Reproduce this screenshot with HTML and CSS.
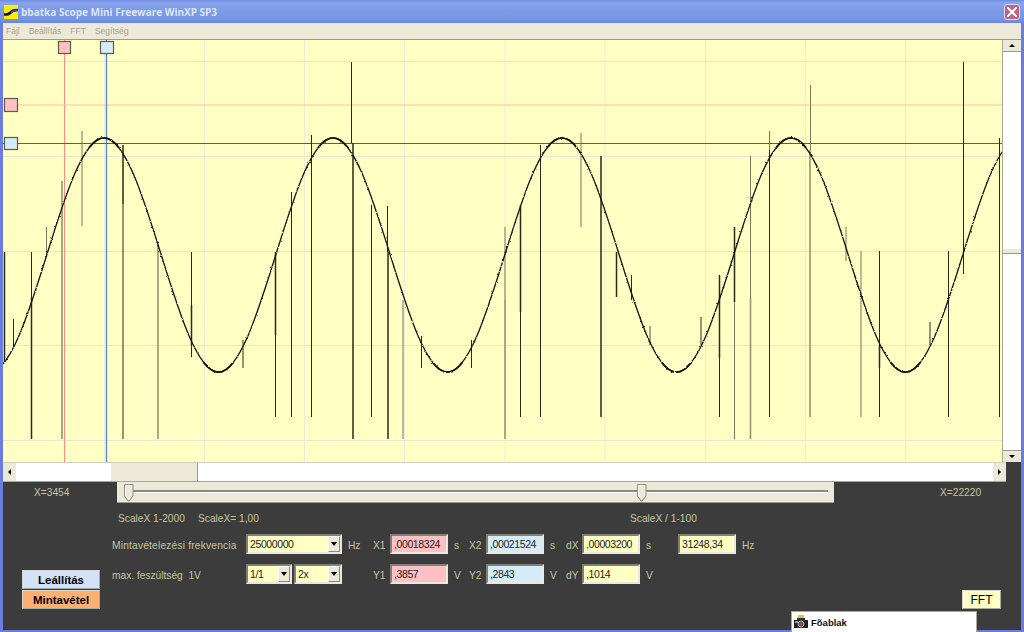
FILE: index.html
```html
<!DOCTYPE html>
<html lang="hu">

<head>
    <meta charset="UTF-8">
    <title>bbatka Scope Mini Freeware WinXP SP3</title>
    <link rel="stylesheet" href="styles.css">
</head>

<body>
    <div class="window">

        <div class="titlebar">
            <svg class="app-icon" width="14" height="14" viewBox="0 0 14 14">
                <rect width="14" height="14" fill="#ffee00"/>
                <path d="M0 9.5C3 9.5 4 10 6 8S9 5 14 5" fill="none" stroke="#0a0a60" stroke-width="2.6"/>
                <path d="M7 7.5C9 5.5 11 5 14 5" fill="none" stroke="#1c50e8" stroke-width="1.6"/>
            </svg>
            <span class="title">bbatka Scope Mini Freeware WinXP SP3</span>
            <div class="close">
                <svg width="10" height="10" viewBox="0 0 10 10">
                    <path d="M1 1L9 9M9 1L1 9" stroke="#fff" stroke-width="2" stroke-linecap="square"/>
                </svg>
            </div>
        </div>

        <div class="menubar">
            <span>Fájl</span>
            <span>Beállítás</span>
            <span>FFT</span>
            <span>Segítség</span>
        </div>

        <div class="scope-row">
            <svg class="scope" width="999" height="422" viewBox="3 40 999 422">
                <defs>
                    <filter id="rough" filterUnits="userSpaceOnUse" x="-20" y="0" width="1060" height="500" color-interpolation-filters="sRGB">
                        <feTurbulence type="fractalNoise" baseFrequency="0.8" numOctaves="1" seed="3"/>
                        <feDisplacementMap in="SourceGraphic" scale="2.4" xChannelSelector="R" yChannelSelector="G"/>
                    </filter>
                </defs>

                <!-- racs -->
                <path class="grid" d="M104.5 40V462M204.5 40V462M304.5 40V462M404.5 40V462M505 40V462M605 40V462M705.5 40V462M805.5 40V462M905.5 40V462"/>
                <path class="grid-h" d="M3 61.5H1002M3 156.5H1002M3 251.5H1002M3 345.5H1002M3 440.5H1002"/>

                <!-- kurzorok -->
                <path class="cursor-red-v" d="M64.5 40V462"/>
                <path class="cursor-red-h" d="M3 105H1002"/>
                <path class="cursor-blue-v" d="M106.5 40V462"/>
                <path class="cursor-blue-h" d="M3 143.5H1002"/>

                <!-- tuskek -->
                <path class="spike" d="M13.5 319V347M31.5 252V298M123 204V439M191.5 252V357M243 340V368M275.5 335V417M291.5 192V417M311.5 135V417M351.5 62V143M371.5 205V417M387.5 206V252M421.5 336V368M471.5 340V368M520.5 312V417M540.5 145V417M616.5 252V297M631.5 275V300M701 317V345M719.5 358V417M769.5 131V417M879.5 251V417M930 322V345M948.5 251V417M963.5 62V274M999.5 138V417"/>
                <path class="spike-thick" d="M4.5 252V362M31.5 298V439M123 145V204M191.5 305V345M275.5 252V335M353 143V439M388 252V439M520.5 205V312M601 156V417M616.5 252V297M719.5 275V358M734.5 227V302M879.5 345V368"/>
                <path class="spike-olive" d="M46.5 227V255M82 131V226M403 300V439M505 227V300M581 133V227M734.5 302V439M750.5 156V297M769.5 131V150M810.5 85V150M846 227V261M861 251V417"/>
                <path class="spike-olive-thick" d="M62 181V439M158 245V439M505 300V439M650 326V345M750.5 297V439M810 150V417"/>

                <!-- jel -->
                <path class="trace" filter="url(#rough)" d="M-10.5 372c41.7 0 72.8-234 114.5-234s72.8 234 114.5 234s72.8-234 114.5-234s72.8 234 114.5 234s72.8-234 114.5-234s72.8 234 114.5 234s72.8-234 114.5-234s72.8 234 114.5 234s72.8-234 114.5-234"/>
                <path class="trace-fuzz" filter="url(#rough)" d="M89 147.8Q104 128 119 147.8M318 147.8Q333 128 348 147.8M547 147.8Q562 128 577 147.8M776 147.8Q791 128 806 147.8M203.5 362.2Q218.5 382 233.5 362.2M432.5 362.2Q447.5 382 462.5 362.2M661.5 362.2Q676.5 382 691.5 362.2M890.5 362.2Q905.5 382 920.5 362.2"/>

                <!-- fogantyuk -->
                <rect class="handle-red" x="58.5" y="41.5" width="12" height="12"/>
                <rect class="handle-blue" x="100.5" y="41.5" width="13" height="12"/>
                <rect class="handle-red" x="4.5" y="98.5" width="13" height="13"/>
                <rect class="handle-blue" x="4.5" y="137.5" width="13" height="12"/>
            </svg>

            <div class="vscroll">
                <div class="vscroll-btn"><i class="arrow-up"></i></div>
                <div class="vscroll-track"></div>
                <div class="vscroll-thumb"></div>
                <div class="vscroll-track"></div>
                <div class="vscroll-btn"><i class="arrow-down"></i></div>
            </div>
        </div>

        <div class="panel">
            <div class="hscroll">
                <div class="hscroll-btn"><i class="arrow-left"></i></div>
                <div class="hscroll-track first"></div>
                <div class="hscroll-thumb"></div>
                <div class="hscroll-track"></div>
                <div class="hscroll-btn"><i class="arrow-right"></i></div>
            </div>

            <div class="slider-row">
                <span class="pos-left">X=3454</span>
                <div class="slider">
                    <div class="channel"></div>
                    <svg class="thumb thumb-a" width="10" height="18" viewBox="0 0 10 18">
                        <path d="M.5 .5H9V12L5 17H4L.5 12Z" fill="#ece9d8" stroke="#8f8d80"/>
                        <path d="M1.5 12V1.5H8" fill="none" stroke="#fff"/>
                    </svg>
                    <svg class="thumb thumb-b" width="10" height="18" viewBox="0 0 10 18">
                        <path d="M.5 .5H9V12L5 17H4L.5 12Z" fill="#ece9d8" stroke="#8f8d80"/>
                        <path d="M1.5 12V1.5H8" fill="none" stroke="#fff"/>
                    </svg>
                </div>
                <span class="pos-right">X=22220</span>
            </div>

            <div class="scale-row">
                <span class="scale-a">ScaleX 1-2000</span>
                <span class="scale-b">ScaleX= 1,00</span>
                <span>ScaleX / 1-100</span>
            </div>

            <div class="controls">
                <div class="run-buttons">
                    <button class="btn-stop">Leállítás</button>
                    <button class="btn-sample">Mintavétel</button>
                </div>

                <div class="fields">
                    <span class="lbl wide">Mintavételezési frekvencia</span>
                    <div class="combo">25000000<i class="combo-btn"></i></div>
                    <span class="lbl unit">Hz</span>
                    <span class="lbl">X1</span>
                    <div class="field red">,00018324</div>
                    <span class="lbl unit">s</span>
                    <span class="lbl">X2</span>
                    <div class="field blue">,00021524</div>
                    <span class="lbl unit">s</span>
                    <span class="lbl">dX</span>
                    <div class="field">,00003200</div>
                    <span class="lbl unit">s</span>
                    <div class="field">31248,34</div>
                    <span class="lbl unit">Hz</span>

                    <span class="lbl">max. feszültség&nbsp; 1V</span>
                    <div class="combo-pair">
                        <div class="combo">1/1<i class="combo-btn"></i></div>
                        <div class="combo">2x<i class="combo-btn"></i></div>
                    </div>
                    <span></span>
                    <span class="lbl">Y1</span>
                    <div class="field red">,3857</div>
                    <span class="lbl unit">V</span>
                    <span class="lbl">Y2</span>
                    <div class="field blue">,2843</div>
                    <span class="lbl unit">V</span>
                    <span class="lbl">dY</span>
                    <div class="field">,1014</div>
                    <span class="lbl unit">V</span>
                </div>

                <button class="btn-fft">FFT</button>
            </div>
        </div>

        <div class="taskitem">
            <svg width="14" height="14" viewBox="0 0 14 14">
                <rect x="4" y="0" width="6" height="3" fill="#e8c030"/>
                <rect x="3" y="3" width="8" height="3" fill="#333"/>
                <rect x="0" y="5" width="14" height="8" fill="#222"/>
                <rect x="1" y="6" width="3" height="2" fill="#9a9a9a"/>
                <circle cx="7" cy="9" r="3" fill="#555" stroke="#bbb"/>
                <circle cx="7" cy="9" r="1.2" fill="#c04040"/>
            </svg>
            <span>Fõablak</span>
        </div>

    </div>
</body>

</html>
```

FILE: styles.css
```css
* {
    margin: 0;
    padding: 0;
    box-sizing: border-box;
}

body {
    overflow: hidden;
    font-family: "Liberation Sans", Arial, sans-serif;
}

.window {
    position: relative;
    display: flex;
    flex-direction: column;
    width: 1024px;
    height: 632px;
    background-color: #6a7cdc;
    padding: 0 3px 2px;
}

/* cimsor */
.titlebar {
    display: flex;
    align-items: center;
    height: 23px;
    margin: 0 -3px;
    padding: 0 4px;
    background: linear-gradient(#6f8ae0, #88a4ec 12%, #7c9ce6 45%, #7797e4 80%, #6a86dc);
}

.app-icon {
    flex: none;
}

.title {
    margin-left: 3px;
    font-family: "Open Sans", "Liberation Sans", sans-serif;
    font-size: 10px;
    font-weight: 700;
    color: #dbe4f8;
    white-space: nowrap;
}

.close {
    display: flex;
    align-items: center;
    justify-content: center;
    width: 16px;
    height: 16px;
    margin-left: auto;
    background-color: #bf6480;
    border: 1px solid #d8dcf4;
    border-radius: 3px;
}

/* menu */
.menubar {
    display: flex;
    align-items: center;
    height: 17px;
    padding-left: 3px;
    gap: 9px;
    background-color: #ece9d8;
    border-bottom: 1px solid #9c9a8c;
    font-size: 8.5px;
    color: #a6a498;
}

/* rajzterulet */
.scope-row {
    display: flex;
    height: 422px;
}

.scope {
    flex: none;
    display: block;
    background-color: #ffffc4;
}

.grid,
.grid-h,
.cursor-red-v,
.cursor-red-h,
.cursor-blue-v,
.cursor-blue-h,
.spike,
.spike-thick,
.spike-olive,
.spike-olive-thick,
.trace,
.trace-fuzz {
    fill: none;
}

.grid {
    stroke: #ecebd8;
}

.grid-h {
    stroke: #e9e6cf;
}

.cursor-red-v {
    stroke: #ff8c84;
}

.cursor-red-h {
    stroke: #ffc0a0;
}

.cursor-blue-v {
    stroke: #5c8ad8;
    stroke-width: 1.4;
}

.cursor-blue-h {
    stroke: #2f62b4;
}

.spike {
    stroke: #2a2a18;
}

.spike-thick {
    stroke: #2a2a18;
    stroke-width: 1.5;
}

.spike-olive {
    stroke: #77775a;
}

.spike-olive-thick {
    stroke: #8f8f68;
    stroke-width: 1.5;
}

.trace {
    stroke: #141410;
    stroke-width: 1.3;
}

.trace-fuzz {
    stroke: #141410;
    stroke-width: 1.9;
}

.handle-red,
.handle-blue {
    stroke: #5a5a50;
    stroke-width: 1.2;
}

.handle-red {
    fill: #ffc0c4;
}

.handle-blue {
    fill: #d4ecf6;
}

/* fuggoleges gorgeto */
.vscroll {
    flex: 1;
    display: flex;
    flex-direction: column;
    border-left: 1px solid #aaa894;
    background-color: #fff;
}

.vscroll-btn {
    display: flex;
    align-items: center;
    justify-content: center;
    height: 12px;
    background-color: #ece9d8;
    border-bottom: 1px solid #9c9a8c;
}

.vscroll-btn:last-child {
    border-top: 1px solid #9c9a8c;
    border-bottom: 0;
}

.vscroll-track {
    flex: 1;
}

.vscroll-thumb {
    height: 6px;
    background-color: #ece9d8;
    border-top: 1px solid #fff;
    border-bottom: 1px solid #9c9a8c;
}

.arrow-up,
.arrow-down,
.arrow-left,
.arrow-right {
    width: 0;
    height: 0;
    border-style: solid;
    border-color: transparent;
}

.arrow-up {
    border-width: 0 3px 3px;
    border-bottom-color: #000;
}

.arrow-down {
    border-width: 3px 3px 0;
    border-top-color: #000;
}

.arrow-left {
    border-width: 3px 3px 3px 0;
    border-right-color: #000;
}

.arrow-right {
    border-width: 3px 0 3px 3px;
    border-left-color: #000;
}

/* also panel */
.panel {
    flex: 1;
    display: flex;
    flex-direction: column;
    background-color: #3c3c3c;
    color: #c6c69e;
    font-size: 10.2px;
}

.hscroll {
    display: flex;
    width: 1003px;
    height: 20px;
    background-color: #fff;
    border-top: 1px solid #d0cebc;
    border-bottom: 1px solid #aaa894;
}

.hscroll-btn {
    display: flex;
    align-items: center;
    justify-content: center;
    flex: none;
    width: 13px;
    background-color: #ece9d8;
}

.hscroll-track {
    flex: 1;
}

.hscroll-track.first {
    flex: none;
    width: 94px;
}

.hscroll-thumb {
    width: 88px;
    background-color: #ece9d8;
    border-left: 1px solid #fff;
    border-right: 1px solid #9c9a8c;
}

.slider-row {
    display: grid;
    grid-template-columns: 114px 717px 1fr;
    align-items: center;
    height: 21px;
}

.pos-left {
    padding-left: 31px;
}

.pos-right {
    padding-left: 106px;
}

.slider {
    position: relative;
    height: 21px;
    background-color: #ece9d8;
    border-bottom: 1px solid #9c9a8c;
}

.channel {
    margin: 8px 6px 0 10px;
    height: 3px;
    background-color: #8c8a7c;
    border-bottom: 1px solid #fff;
}

.thumb {
    position: absolute;
    top: 2px;
}

.thumb-a {
    left: 7px;
}

.thumb-b {
    left: 520px;
}

.scale-row {
    display: flex;
    align-items: center;
    height: 30px;
    padding-left: 115px;
}

.scale-a {
    width: 80px;
}

.scale-b {
    width: 432px;
}

.controls {
    display: flex;
    align-items: flex-start;
    padding-top: 1px;
}

.run-buttons {
    display: flex;
    flex-direction: column;
    gap: 1px;
    width: 78px;
    margin: 36px 0 0 19px;
}

.run-buttons button,
.btn-fft {
    height: 19px;
    border: 1px solid #a8a89c;
    border-top-color: #d8d8d0;
    border-left-color: #d8d8d0;
    font-family: "Liberation Sans", Arial, sans-serif;
    font-weight: 700;
    font-size: 11.5px;
    color: #000;
}

.btn-stop {
    background-color: #d2e2f8;
}

.btn-sample {
    background-color: #ffb070;
}

.fields {
    display: grid;
    grid-template-columns: 134px 96px 31px 17px 58px 21px 17px 58px 22px 16px 58px 38px 58px 30px;
    grid-auto-rows: 20px;
    row-gap: 10px;
    margin-left: 12px;
}

.lbl {
    align-self: center;
    padding-top: 3px;
    white-space: nowrap;
}

.lbl.wide {
    letter-spacing: 0.2px;
}

.unit {
    padding-left: 6px;
}

.field,
.combo {
    display: flex;
    align-items: center;
    padding-left: 2px;
    background-color: #ffffc4;
    border: 2px solid;
    border-color: #808078 #e8e8e0 #e8e8e0 #808078;
    color: #1c1c1c;
    font-size: 10.5px;
    letter-spacing: -0.4px;
}

.field.red {
    background-color: #ffc0c4;
}

.field.blue {
    background-color: #d4ecf6;
}

.combo {
    justify-content: space-between;
    padding-right: 0;
}

.combo-pair {
    display: flex;
    gap: 2px;
}

.combo-pair .combo:first-child {
    width: 46px;
}

.combo-pair .combo:last-child {
    width: 48px;
}

.combo-btn {
    position: relative;
    flex: none;
    width: 12px;
    height: 16px;
    background-color: #ece9d8;
    border: 1px solid;
    border-color: #fff #8c8a7c #8c8a7c #fff;
}

/* a nyil a gomb folott */
.combo-btn::after {
    content: "";
    position: absolute;
    left: 2px;
    top: 5px;
    border-style: solid;
    border-width: 4px 3px 0;
    border-color: #000 transparent transparent;
}

.btn-fft {
    width: 39px;
    margin: 56px 20px 0 auto;
    background-color: #ffffc4;
    font-weight: 400;
    font-size: 12px;
}

/* tulloghato talcaablak */
.taskitem {
    position: absolute;
    left: 791px;
    top: 611px;
    display: flex;
    align-items: center;
    gap: 3px;
    width: 186px;
    height: 21px;
    padding-left: 2px;
    background-color: #fff;
    border-top: 1px solid #aaa894;
    border-left: 1px solid #aaa894;
    border-right: 1px solid #aaa894;
    font-family: "Liberation Sans", Arial, sans-serif;
    font-size: 9.5px;
    font-weight: 700;
    color: #111;
}
```
